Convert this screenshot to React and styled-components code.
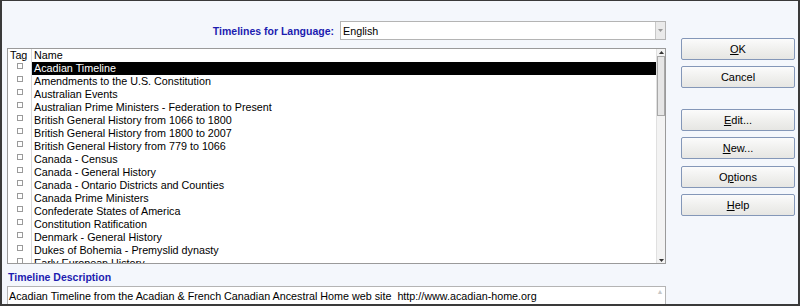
import React from "react";
import styled, { createGlobalStyle } from "styled-components";

const Global = createGlobalStyle`
  html, body { margin: 0; padding: 0; background: #f4f7fc; }
  body { font-family: "Liberation Sans", Arial, sans-serif; font-size: 10.75px; color: #000; }
`;

const Frame = styled.div`
  box-sizing: border-box;
  width: 800px;
  height: 306px;
  overflow: hidden;
  background: #f4f7fc;
  border-top: 1px solid #3a3a3a;
  border-left: 2px solid #3a3a3a;
  border-right: 2px solid #3a3a3a;
  border-bottom: 2px solid #3a3a3a;
  display: flex;
  gap: 15px;
  padding: 20px 3px 0 5px;
`;

const Main = styled.div`
  width: 659px;
  flex: none;
  display: flex;
  flex-direction: column;
`;

const LangRow = styled.div`
  display: flex;
  align-items: center;
  justify-content: flex-end;
  gap: 6px;
  height: 19px;
  flex: none;
`;

const BlueLabel = styled.span`
  font-weight: bold;
  color: #1c1cb0;
  font-size: 10.5px;
`;

const Select = styled.div`
  box-sizing: border-box;
  width: 326px;
  height: 19px;
  border: 1px solid #b4b4b4;
  background: #fff;
  display: flex;
  align-items: center;
  padding-left: 2px;
  position: relative;
`;

const SelectButton = styled.div`
  position: absolute;
  right: 0;
  top: 0;
  bottom: 0;
  width: 9px;
  background: #eaeaea;
  border-left: 1px solid #c8c8c8;
  display: flex;
  align-items: center;
  justify-content: center;
`;

const ListBox = styled.div`
  box-sizing: border-box;
  margin-top: 8px;
  height: 216px;
  flex: none;
  border: 1px solid #9a9a9a;
  background: #fff;
  display: flex;
  overflow: hidden;
`;

const ListBody = styled.div`
  flex: 1;
  display: flex;
  flex-direction: column;
  overflow: hidden;
`;

const HeaderRow = styled.div`
  display: grid;
  grid-template-columns: 23px 1fr;
  height: 13px;
  line-height: 13px;
  flex: none;
`;

const HeadCell = styled.div`
  padding-left: 2px;
  border-left: ${(p) => (p.$first ? "none" : "1px solid #d8d8d8")};
`;

const Row = styled.div`
  display: grid;
  grid-template-columns: 23px 1fr;
  height: 13px;
  flex: none;
`;

const TagCell = styled.div`
  display: flex;
  justify-content: center;
  padding-top: 1px;
  box-sizing: border-box;
`;

const Check = styled.span`
  display: block;
  width: 4px;
  height: 4px;
  border: 1px solid #9a9a9a;
  background: #fff;
`;

const NameCell = styled.div`
  box-sizing: border-box;
  border-left: 1px solid #d8d8d8;
  border-bottom: 1px solid ${(p) => (p.$sel ? "#000" : "#dedede")};
  background: ${(p) => (p.$sel ? "#000" : "#fff")};
  color: ${(p) => (p.$sel ? "#fff" : "#000")};
  padding-left: 2px;
  line-height: 13px;
  white-space: nowrap;
`;

const ScrollBar = styled.div`
  width: 8px;
  flex: none;
  display: flex;
  flex-direction: column;
  align-items: center;
  background: #f3f3f3;
  border-left: 1px solid #e0e0e0;
`;

const Arrow = styled.div`
  width: 7px;
  height: 6px;
  display: flex;
  align-items: center;
  justify-content: center;
  flex: none;
`;

const Thumb = styled.div`
  box-sizing: border-box;
  width: 8px;
  height: 60px;
  border: 1px solid #a8a8a8;
  background: #e6e6e6;
  margin-top: 1px;
`;

const Spacer = styled.div`
  flex: 1;
`;

const DescLabel = styled(BlueLabel)`
  display: block;
  margin-top: 7px;
  padding-left: 1px;
  line-height: 13px;
  flex: none;
`;

const DescBox = styled.div`
  box-sizing: border-box;
  margin-top: 2px;
  height: 30px;
  flex: none;
  border: 1px solid #b4b4b4;
  background: #fff;
  padding: 3px 1px;
  display: flex;
  justify-content: space-between;
  white-space: pre;
`;

const DescScroll = styled.div`
  width: 8px;
  display: flex;
  justify-content: center;
  color: #c8c8c8;
  font-size: 7px;
  line-height: 8px;
  margin-top: -2px;
`;

const Buttons = styled.div`
  width: 114px;
  display: flex;
  flex-direction: column;
  padding-top: 17px;
`;

const Button = styled.button`
  box-sizing: border-box;
  width: 114px;
  height: 22px;
  margin-top: ${(p) => p.$gap}px;
  border: 1px solid #8497b8;
  border-radius: 2px;
  background: linear-gradient(#fbfbfb, #f0f0ee 50%, #e6e6e3);
  font-family: "Liberation Sans", Arial, sans-serif;
  font-size: 11px;
  color: #000;
  padding: 0;
  display: flex;
  align-items: center;
  justify-content: center;
`;

const U = styled.span`
  text-decoration: underline;
`;

const items = [
  "Acadian Timeline",
  "Amendments to the U.S. Constitution",
  "Australian Events",
  "Australian Prime Ministers - Federation to Present",
  "British General History from 1066 to 1800",
  "British General History from 1800 to 2007",
  "British General History from 779 to 1066",
  "Canada - Census",
  "Canada - General History",
  "Canada - Ontario Districts and Counties",
  "Canada Prime Ministers",
  "Confederate States of America",
  "Constitution Ratification",
  "Denmark - General History",
  "Dukes of Bohemia - Premyslid dynasty",
  "Early European History",
];

const Tri = ({ up }) => (
  <svg width="5" height="3" viewBox="0 0 5 3">
    <path d={up ? "M0 3 L2.5 0 L5 3 Z" : "M0 0 L2.5 3 L5 0 Z"} fill="#333" />
  </svg>
);

export default function App() {
  return (
    <>
      <Global />
      <Frame>
        <Main>
          <LangRow>
            <BlueLabel>Timelines for Language:</BlueLabel>
            <Select>
              English
              <SelectButton>
                <svg width="5" height="3" viewBox="0 0 5 3">
                  <path d="M0 0 L2.5 3 L5 0 Z" fill="#999" />
                </svg>
              </SelectButton>
            </Select>
          </LangRow>
          <ListBox>
            <ListBody>
              <HeaderRow>
                <HeadCell $first>Tag</HeadCell>
                <HeadCell>Name</HeadCell>
              </HeaderRow>
              {items.map((t, i) => (
                <Row key={t}>
                  <TagCell>
                    <Check />
                  </TagCell>
                  <NameCell $sel={i === 0}>{t}</NameCell>
                </Row>
              ))}
            </ListBody>
            <ScrollBar>
              <Arrow>
                <Tri up />
              </Arrow>
              <Thumb />
              <Spacer />
              <Arrow>
                <Tri />
              </Arrow>
            </ScrollBar>
          </ListBox>
          <DescLabel>Timeline Description</DescLabel>
          <DescBox>
            {"Acadian Timeline from the Acadian & French Canadian Ancestral Home web site  http://www.acadian-home.org"}
            <DescScroll>▲</DescScroll>
          </DescBox>
        </Main>
        <Buttons>
          <Button $gap={0}>
            <U>O</U>K
          </Button>
          <Button $gap={6}>Cancel</Button>
          <Button $gap={21}>
            <U>E</U>dit...
          </Button>
          <Button $gap={6}>
            <U>N</U>ew...
          </Button>
          <Button $gap={7}>
            O<U>p</U>tions
          </Button>
          <Button $gap={6}>
            <U>H</U>elp
          </Button>
        </Buttons>
      </Frame>
    </>
  );
}
